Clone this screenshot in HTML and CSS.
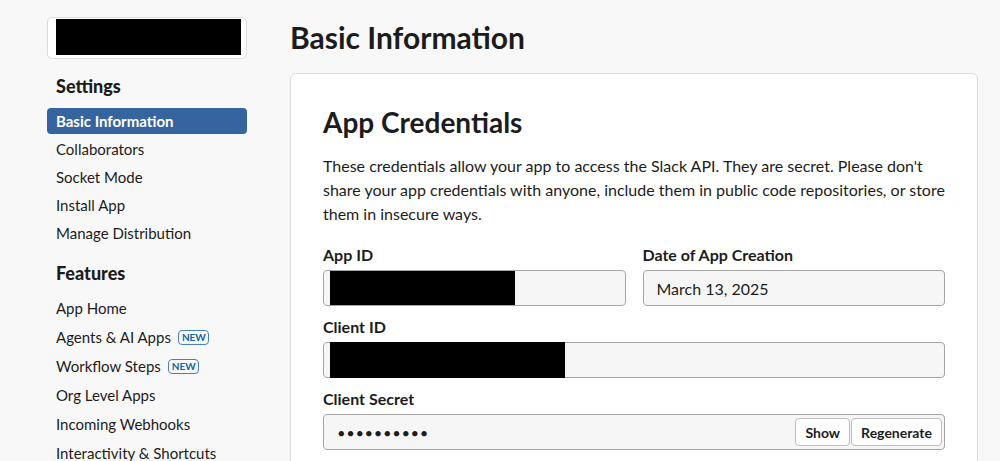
FILE: index.html
```html
<!DOCTYPE html>
<html>
<head>
<meta charset="utf-8">
<link rel="stylesheet" href="styles.css">
</head>
<body>
<div class="page">
  <aside class="sidebar">
    <div class="app-box"><div class="redact redact-logo"></div></div>
    <h3 class="nav-heading nav-heading-first">Settings</h3>
    <ul class="nav">
      <li class="nav-item active">Basic Information</li>
      <li class="nav-item">Collaborators</li>
      <li class="nav-item">Socket Mode</li>
      <li class="nav-item">Install App</li>
      <li class="nav-item">Manage Distribution</li>
    </ul>
    <h3 class="nav-heading">Features</h3>
    <ul class="nav nav-features">
      <li class="nav-item">App Home</li>
      <li class="nav-item">Agents &amp; AI Apps <span class="badge">NEW</span></li>
      <li class="nav-item">Workflow Steps <span class="badge">NEW</span></li>
      <li class="nav-item">Org Level Apps</li>
      <li class="nav-item">Incoming Webhooks</li>
      <li class="nav-item">Interactivity &amp; Shortcuts</li>
    </ul>
  </aside>
  <main class="main">
    <h1 class="page-title">Basic Information</h1>
    <section class="card">
      <h2 class="card-title">App Credentials</h2>
      <p class="card-desc">These credentials allow your app to access the Slack API. They are secret. Please don't share your app credentials with anyone, include them in public code repositories, or store them in insecure ways.</p>
      <div class="row">
        <div class="field">
          <label class="label">App ID</label>
          <div class="input"><div class="redact redact-appid"></div></div>
        </div>
        <div class="field">
          <label class="label">Date of App Creation</label>
          <div class="input"><span class="input-text">March 13, 2025</span></div>
        </div>
      </div>
      <div class="field">
        <label class="label">Client ID</label>
        <div class="input"><div class="redact redact-clientid"></div></div>
      </div>
      <div class="field">
        <label class="label">Client Secret</label>
        <div class="input input-secret">
          <span class="input-text dots">&#9679;&#9679;&#9679;&#9679;&#9679;&#9679;&#9679;&#9679;&#9679;&#9679;</span>
          <div class="btn-group">
            <button class="btn">Show</button>
            <button class="btn">Regenerate</button>
          </div>
        </div>
      </div>
    </section>
  </main>
</div>
</body>
</html>
```
FILE: styles.css
```css
* { box-sizing: border-box; }
html, body { margin: 0; padding: 0; }
body {
  background: #f8f8f8;
  font-family: Lato, "Noto Sans", sans-serif;
  color: #1d1c1d;
  height: 461px;
  overflow: hidden;
}
.page {
  display: flex;
  padding-left: 47px;
}
.sidebar {
  width: 200px;
  flex: none;
  padding-top: 17px;
}
.app-box {
  height: 42px;
  background: #fff;
  border: 1px solid #dddddd;
  border-radius: 5px;
  padding: 1px 5px 2px 8px;
}
.redact { background: #000; }
.redact-logo { height: 36px; width: 185px; }
.nav-heading {
  margin: 0;
  font-size: 18px;
  font-weight: 900;
  line-height: 24px;
  padding-left: 9px;
  margin-top: 15px;
  margin-bottom: 10px;
}
.nav-heading-first { margin-top: 15px; margin-bottom: 10px; }
.nav {
  list-style: none;
  margin: 0;
  padding: 0;
}
.nav-item {
  height: 26px;
  line-height: 26px;
  margin-bottom: 2px;
  padding-left: 9px;
  font-size: 15px;
  border-radius: 4px;
  display: flex;
  align-items: center;
  gap: 7px;
  color: #1d1c1d;
}
.nav-features .nav-item { margin-bottom: 3px; }
.nav-item.active {
  background: #36649e;
  color: #fff;
  font-weight: 700;
}
.badge {
  font-size: 10px;
  font-weight: 700;
  line-height: 13px;
  color: #1264a3;
  border: 1px solid #4a7fc0;
  border-radius: 4px;
  padding: 0 3px;
  width: 31px;
  text-align: center;
}
.main {
  margin-left: 43px;
  width: 688px;
  flex: none;
}
.page-title {
  margin: 0;
  font-size: 30px;
  font-weight: 700;
  line-height: 38px;
  padding-top: 18px;
  margin-bottom: 17px;
}
.card {
  background: #fff;
  border: 1px solid #dddddd;
  border-radius: 6px;
  padding: 30px 32px 20px;
  height: 420px;
}
.card-title {
  margin: 0;
  font-size: 28px;
  font-weight: 700;
  line-height: 36px;
}
.card-desc {
  margin: 14px 0 18px;
  font-size: 16px;
  line-height: 24px;
}
.row {
  display: flex;
  gap: 17px;
}
.row .field { flex: 1; }
.field { margin-bottom: 10px; }
.label {
  display: block;
  font-size: 16px;
  font-weight: 700;
  line-height: 22px;
  margin-bottom: 4px;
}
.input {
  height: 36px;
  background: #f6f6f6;
  border: 1px solid #a5a5a5;
  border-radius: 4px;
  display: flex;
  align-items: center;
  padding: 0 6px;
}
.input-text {
  font-size: 16px;
  padding-left: 7px;
}
.redact-appid { height: 34px; width: 185px; }
.redact-clientid { height: 36px; width: 235px; }
.dots {
  font-size: 11px;
  letter-spacing: 2.6px;
  padding-left: 8px;
}
.input-secret { justify-content: space-between; padding-right: 2px; }
.btn-group { display: flex; }
.btn {
  font-family: Lato, "Noto Sans", sans-serif;
  font-size: 14px;
  font-weight: 700;
  color: #1d1c1d;
  background: #fff;
  border: 1px solid #bdbdbd;
  border-radius: 4px;
  height: 28px;
  padding: 0 9px;
  margin: 0;
}
.btn + .btn { margin-left: 1px; }
```
